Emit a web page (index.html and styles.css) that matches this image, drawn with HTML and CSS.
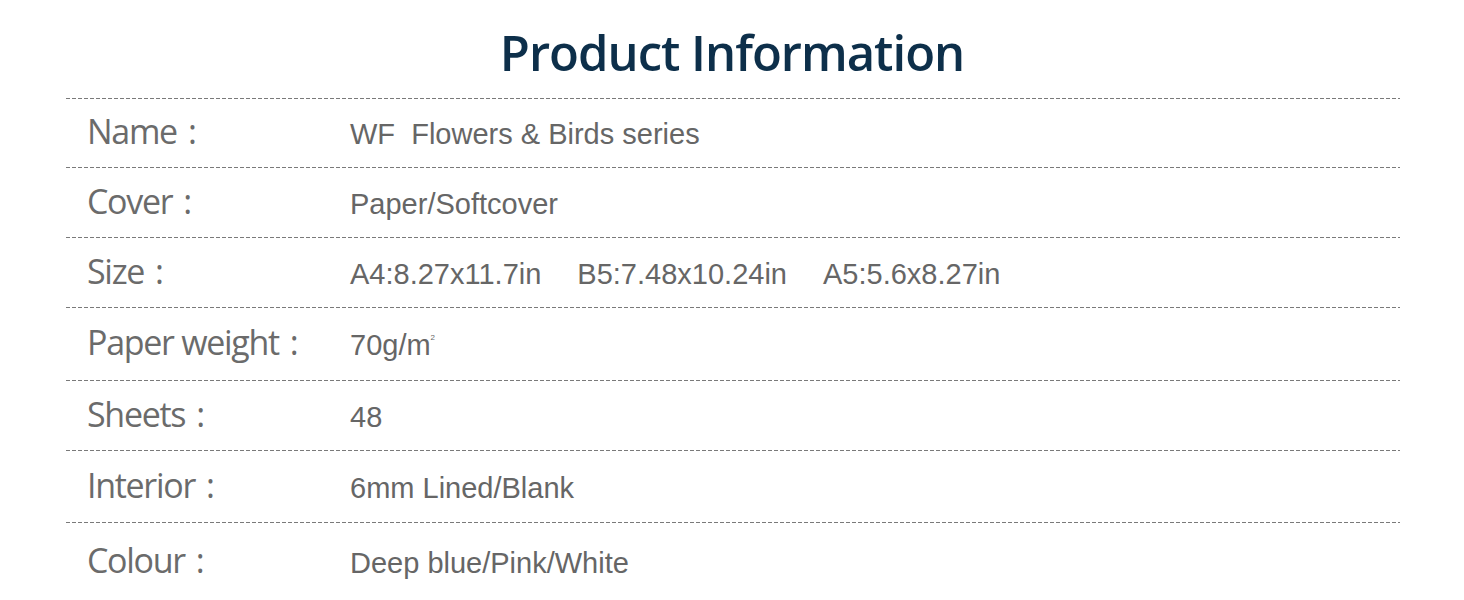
FILE: index.html
```html
<!DOCTYPE html>
<html>
<head>
<meta charset="utf-8">
<link rel="stylesheet" href="styles.css">
</head>
<body>
<div class="page">
  <h1 class="title">Product Information</h1>
  <div class="table">
    <div class="row r1"><div class="label">Name<span class="colon">:</span></div><div class="value">WF&nbsp; Flowers &amp; Birds series</div></div>
    <div class="row r2"><div class="label">Cover<span class="colon">:</span></div><div class="value">Paper/Softcover</div></div>
    <div class="row r3"><div class="label">Size<span class="colon">:</span></div><div class="value sizes"><span>A4:8.27x11.7in</span><span>B5:7.48x10.24in</span><span>A5:5.6x8.27in</span></div></div>
    <div class="row r4"><div class="label">Paper weight<span class="colon">:</span></div><div class="value">70g/m<sup>2</sup></div></div>
    <div class="row r5"><div class="label">Sheets<span class="colon">:</span></div><div class="value">48</div></div>
    <div class="row r6"><div class="label">Interior<span class="colon">:</span></div><div class="value">6mm Lined/Blank</div></div>
    <div class="row r7"><div class="label">Colour<span class="colon">:</span></div><div class="value">Deep blue/Pink/White</div></div>
  </div>
</div>
</body>
</html>
```

FILE: styles.css
```css
html, body { margin: 0; padding: 0; background: #fff; }
.page { width: 1464px; height: 600px; overflow: hidden; }
.title {
  margin: 0;
  height: 98px;
  box-sizing: border-box;
  padding-top: 22px;
  text-align: center;
  font-family: "Open Sans", sans-serif;
  font-weight: 600;
  font-size: 49px;
  line-height: 60px;
  color: #0d2f4a;
  letter-spacing: -1px;
}
.table { margin-left: 66px; width: 1334px; }
.row {
  display: flex;
  align-items: center;
  height: 70px;
  background-image: repeating-linear-gradient(to right, #7a7a7a 0 4px, transparent 4px 6px);
  background-size: 100% 1px;
  background-repeat: no-repeat;
  background-position: top left;
}
.r1 { height: 69px; }
.r4 { height: 73px; }
.r6 { height: 72px; }
.r7 { height: 78px; }
.label {
  width: 283px;
  padding-left: 21px;
  padding-bottom: 3px;
  box-sizing: border-box;
  font-family: "Open Sans", sans-serif;
  font-size: 34px;
  color: #6b6b6b;
  letter-spacing: -1.3px;
}
.colon { margin-left: 11px; }
.value {
  padding-left: 1px;
  padding-top: 4px;
  font-family: "Liberation Sans", Arial, sans-serif;
  font-size: 29px;
  color: #666;
}
.value sup { font-size: 8px; vertical-align: 15px; }
.sizes { display: flex; gap: 36px; }
```
